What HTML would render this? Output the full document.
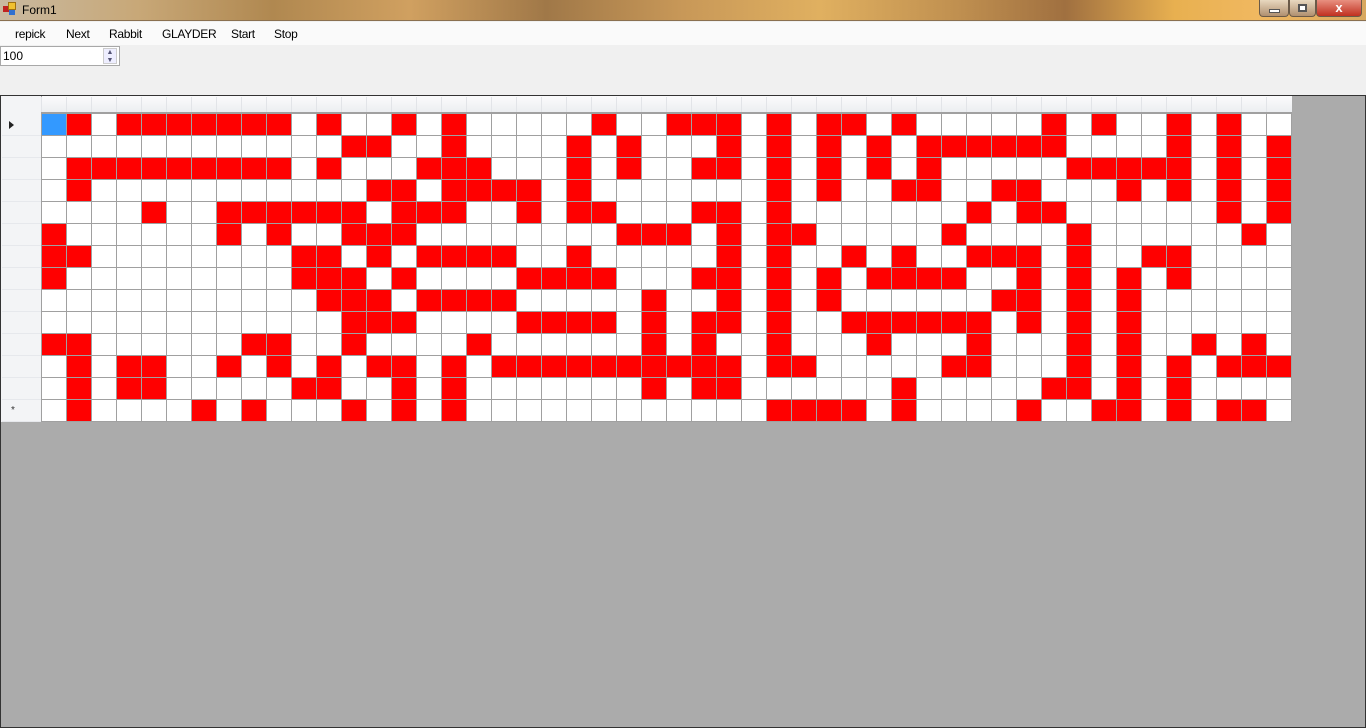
<!DOCTYPE html>
<html><head><meta charset="utf-8"><style>
*{margin:0;padding:0;box-sizing:border-box}
body{width:1366px;height:728px;overflow:hidden;background:#f0f0f0;font-family:"Liberation Sans",sans-serif;position:relative}
#title{position:absolute;left:0;top:0;width:1366px;height:21px;background:linear-gradient(90deg,#c9b9a0 0%,#c8a878 10%,#b08850 20%,#d0a060 30%,#a07848 40%,#c89858 50%,#e0b060 60%,#c09050 70%,#a07040 78%,#e8b050 86%,#f0b860 92%,#d8a860 100%);border-bottom:1px solid #8a7050}
#title span{position:absolute;left:22px;top:3px;font-size:12px;color:#000}
.ico{position:absolute;left:3px;top:6px;width:6px;height:6px;background:#c02020}
.ico2{position:absolute;left:8px;top:2px;width:8px;height:8px;background:#f0c030;border:1px solid #a07010}
.ico3{position:absolute;left:9px;top:10px;width:6px;height:5px;background:#3070d0}
.wb{position:absolute;top:0;height:17px;border:1px solid #6a5a48;border-top:none;border-radius:0 0 4px 4px;background:linear-gradient(#e8d8c0,#b09070)}
#menu{position:absolute;left:0;top:22px;width:1366px;height:23px;background:#fafafa}
#menu span{position:absolute;top:5px;font-size:12px;color:#000;letter-spacing:-0.3px}
#num{position:absolute;left:0;top:46px;width:120px;height:20px;border:1px solid #a8a8a8;background:#fff;font-size:12px;padding:2px 0 0 2px}
#grid{position:absolute;left:0;top:95px;width:1366px;height:633px;background:#ababab;border:1px solid #333}
#hdr{position:absolute;left:0;top:0;width:1291px;height:17px;background:linear-gradient(#fbfbfc,#eceef1);border-bottom:1px solid #a0a0a0}
#rh{position:absolute;left:0;top:0;width:41px;height:326px;background:#f3f4f6;border-right:1px solid #a0a0a0}
.c{position:absolute;width:26px;height:23px;border:1px solid #a0a0a0;background:#fff}
.r{background:#f00}
.hd{position:absolute;top:1px;width:1px;height:15px;background:#e2e4e8}
</style></head><body>
<div id="title"><div class="ico"></div><div class="ico2"></div><div class="ico3"></div><span>Form1</span>
<div class="wb" style="left:1259px;width:30px"><div style="position:absolute;left:9px;top:9px;width:11px;height:4px;background:#fff;border:1px solid #555"></div></div>
<div class="wb" style="left:1289px;width:27px"><div style="position:absolute;left:8px;top:4px;width:9px;height:8px;border:2px solid #555;background:#fff"></div></div>
<div class="wb" style="left:1316px;width:46px;background:linear-gradient(#e89080,#c03020)"><div style="position:absolute;left:0;width:44px;top:0;text-align:center;color:#fff;font-weight:bold;font-size:13px">x</div></div>
</div>
<div id="menu"><span style="left:15px">repick</span><span style="left:66px">Next</span><span style="left:109px">Rabbit</span><span style="left:162px">GLAYDER</span><span style="left:231px">Start</span><span style="left:274px">Stop</span></div>
<div id="num">100<div style="position:absolute;right:2px;top:1px;width:14px;height:16px;border:1px solid #ccc;background:#eef;font-size:7px;color:#557;text-align:center;line-height:8px">▲<br>▼</div></div>
<div id="grid"><div id="hdr"></div><div id="rh"></div>
<div style="position:absolute;left:8px;top:25px;width:0;height:0;border-left:5px solid #222;border-top:4px solid transparent;border-bottom:4px solid transparent"></div>
<div style="position:absolute;left:10px;top:309px;font-size:10px;color:#333">*</div>
<div id="cells"></div></div>
<script>
var A=[
"BR.RRRRRRR.R..R.","............RR..",".RRRRRRRRR.R...R",".R...........RR.","....R..RRRRRR.RR","R......R.R..RRR.","RR........RR.R.R","R.........RRR.R.","...........RRR.R","............RRR.","RR......RR..R...",".R.RR..R.R.R.RR.",".R.RR.....RR..R.",".R....R.R...R.R."];
var B=[
".R.....R..RRR.R.RR",".R....R.R...R.R.R.","RRR...R.R..RR.R.R.",".RRRR.R.......R.R.","RR..R.RR...RR.R...","........RRR.R.RR..","RRRR..R.....R.R..R","....RRRR...RR.R.R.","RRRR.....R..R.R.R.","....RRRR.R.RR.R..R","..R......R.R..R...",".R.RRRRRRRRRR.RR..",".R.......R.RR.....",".R............RRRR"];
var C=[
"R.R.....R.R..R.R..",".R.RRRRRR....R.R.R",".R.R.....RRRRR.R.R","..RR..RR...R.R.R.R",".....R.RR......R.R","....R....R......R.","R.R..RRR.R..RR....",".RRRR..R.R.R.R....","......RR.R.R......","RRRRRR.R.R.R......",".R...R...R.R..R.R.","....RR...R.R.R.RRR","..R.....RR.R.R....","R.R....R..RR.R.RR."];
var h="";
for(var c=0;c<50;c++){h+='<div class="hd" style="left:'+(40+c*25)+'px"></div>';}
for(var r=0;r<14;r++){h+='<div style="position:absolute;left:1px;width:39px;height:1px;background:#e6e8ec;top:'+(17+r*22+22)+'px"></div>';
var s=A[r].slice(0,15)+B[r].slice(0,17)+C[r];
for(var c=0;c<50;c++){var ch=s[c];var cls=ch=="R"?"c r":"c";var st=ch=="B"?"background:#3399ff;":"";
h+='<div class="'+cls+'" style="'+st+'left:'+(40+c*25)+'px;top:'+(17+r*22)+'px"></div>';}}
document.getElementById("cells").innerHTML=h;
</script>
</body></html>
